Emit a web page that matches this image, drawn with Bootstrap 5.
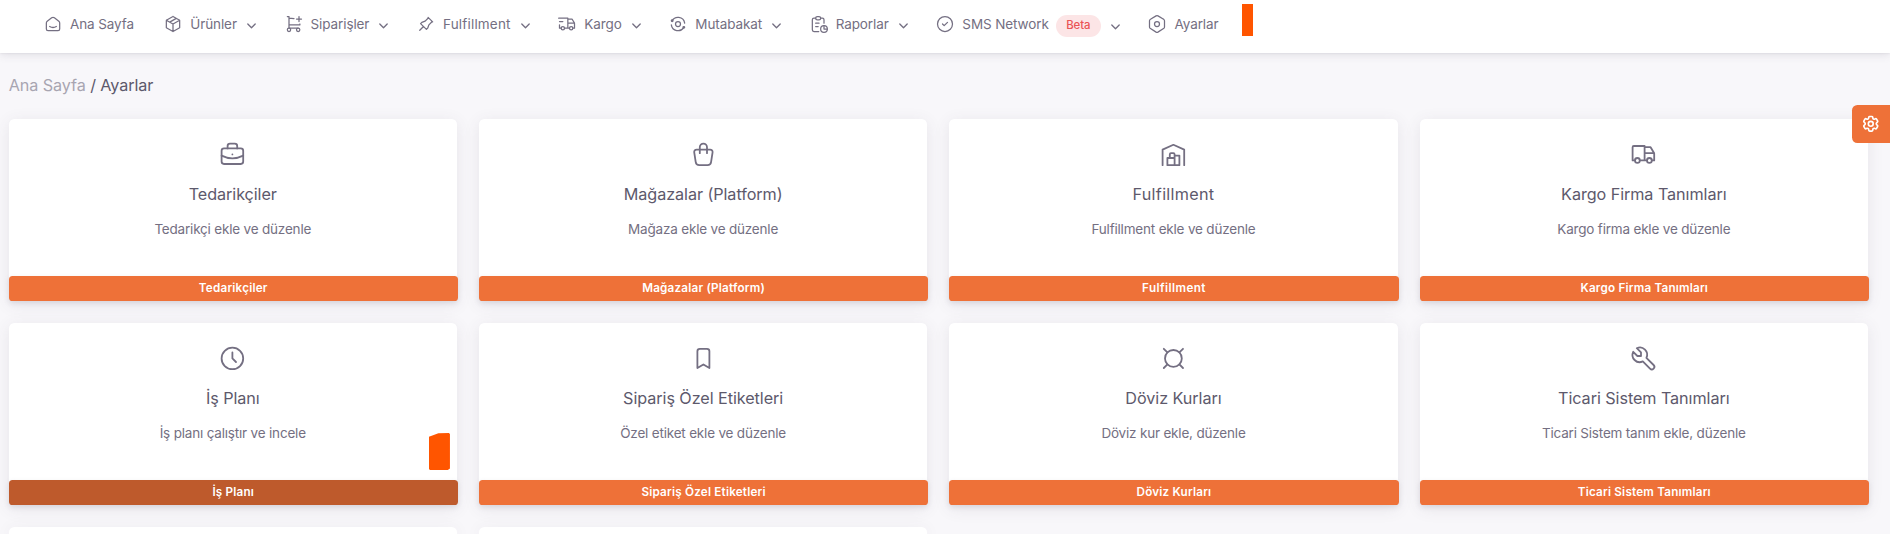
<!DOCTYPE html>
<html lang="tr">
<head>
<meta charset="utf-8">
<meta name="viewport" content="width=device-width, initial-scale=1">
<title>Ayarlar</title>
<link href="https://cdn.jsdelivr.net/npm/bootstrap@5.3.0/dist/css/bootstrap.min.css" rel="stylesheet">
<style>
  html { overflow: hidden; }
  body { background: #f8f7fa; color: #746f82; font-family: Inter, "Liberation Sans", sans-serif; font-size: 13.5px; line-height: 20px; height: 534px; overflow: hidden; }
  svg { fill: none; stroke: currentColor; stroke-width: 1.5; stroke-linecap: round; stroke-linejoin: round; flex: none; }
  .topbar { height: 53px; padding: 0 43px 5px; background: #fff; box-shadow: 0 1px 9px rgba(75, 70, 92, .16), 0 0 2px rgba(75, 70, 92, .12); }
  .topbar .nav-link { padding: 0; color: inherit; letter-spacing: -.1px; margin-right: 27.65px; white-space: nowrap; }
  .topbar .nav-link:first-child { margin-right: 29.3px; }
  .topbar .nav-icon { width: 20px; height: 20px; margin-right: 7px; }
  .topbar .chev { width: 9px; height: 6px; margin: 3px 0 0 10px; stroke-width: 1.3; }
  .spread { letter-spacing: .18px; }
  .beta { background: #fce5e6; color: #ea5455; font-size: 11.4px; font-weight: 500; width: 45px; height: 22px; line-height: 21px; padding: 0; margin: 3px 0 0 7px; letter-spacing: -.1px; }
  .topbar .beta + .chev { margin-top: 5px; }
  .marker-a { width: 11px; height: 32px; margin-left: -4px; background: #ff5500; }
  .crumbs { font-size: 16.2px; line-height: 22px; padding: 21px 0 0 8.8px; letter-spacing: -.1px; height: 66px; color: #5d596c; }
  .crumbs .muted { color: #a8a5b1; }
  .tiles { display: grid; grid-template-columns: repeat(4, minmax(0, 1fr)); gap: 22px; padding: 0 22px 0 8.6px; }
  .tile { height: 182px; border: 0; border-radius: 5.4px; box-shadow: 0 3.6px 16px rgba(75, 70, 92, .1); align-items: center; padding-top: 20.6px; }
  .tile > svg { width: 28.8px; height: 28.8px; }
  .tile h5 { font-size: 16.2px; line-height: 22px; font-weight: 400; color: #5d596c; margin: 14.4px 0 0; letter-spacing: -.07px; }
  .tile p { margin: 14px 0 0; letter-spacing: -.19px; }
  .tile .btn { position: relative; margin-top: auto; width: calc(100% + 1px); margin-right: -1px; height: 25px; padding: 0; border: 0; border-radius: 3.6px; background: #ee7138; color: #fff; font-size: 11.7px; font-weight: 600; line-height: 23px; letter-spacing: .2px; box-shadow: 0 2px 5px rgba(165, 163, 174, .3); }
  .tile .btn.pressed { background: #be5a2c; }
  .tile .spread { letter-spacing: .3px; }
  .tile .btn.spread { letter-spacing: .42px; }
  .tile.cut { height: 7px; padding: 0; border-radius: 5.4px 5.4px 0 0; }
  .marker-b { position: absolute; right: 7px; bottom: 35px; width: 21px; height: 37px; background: #ff5500; clip-path: polygon(0 10%, 45% 1%, 95% 0, 100% 3%, 100% 96%, 90% 100%, 5% 100%, 0 97%); }
  .customizer { position: absolute; right: 0; top: 105px; width: 38px; height: 38px; background: #ee7138; color: #fff; border-radius: 5.4px 0 0 5.4px; }
  .customizer svg { width: 19.5px; height: 19.5px; stroke-width: 2; }
</style>
<script src="https://cdn.jsdelivr.net/npm/bootstrap@5.3.0/dist/js/bootstrap.bundle.min.js"></script>
</head>
<body>
<svg class="d-none">
  <symbol id="chev" viewBox="0 0 9 6"><path d="M.8 1l3.7 3.8L8.2 1"/></symbol>
</svg>
<nav class="topbar d-flex align-items-center">
  <a class="nav-link d-flex align-items-center" href="#">
    <svg class="nav-icon" viewBox="0 0 24 24"><path d="M19 8.710l-5.333 -4.148a2.666 2.666 0 0 0 -3.274 0l-5.334 4.148a2.665 2.665 0 0 0 -1.029 2.105v7.2a2 2 0 0 0 2 2h12a2 2 0 0 0 2 -2v-7.2c0 -.823 -.38 -1.6 -1.03 -2.105M16 15c-2.210 1.333 -5.792 1.333 -8 0"/></svg>
    <span>Ana Sayfa</span></a>
  <a class="nav-link d-flex align-items-center" href="#">
    <svg class="nav-icon" viewBox="0 0 24 24"><path d="M12 3l8 4.500v9l-8 4.500l-8 -4.500v-9l8 -4.500M12 12l8 -4.500M12 12v9M12 12l-8 -4.500M16 5.250l-8 4.500"/></svg>
    <span>Ürünler</span><svg class="chev"><use href="#chev"/></svg></a>
  <a class="nav-link d-flex align-items-center" href="#">
    <svg class="nav-icon" viewBox="0 0 24 24"><circle cx="6" cy="19" r="2"/><circle cx="17" cy="19" r="2"/><path d="M17 17h-11v-14h-2M6 5l6.005 .429m7.138 6.573l-.143 .998h-13M15 6h6m-3 -3v6"/></svg>
    <span>Siparişler</span><svg class="chev"><use href="#chev"/></svg></a>
  <a class="nav-link d-flex align-items-center" href="#">
    <svg class="nav-icon" viewBox="0 0 24 24"><path d="M15 4.500l-4 4l-4 1.500l-1.500 1.500l7 7l1.500 -1.500l1.500 -4l4 -4M9 15l-4.500 4.500M14.500 4l5.500 5.500"/></svg>
    <span class="spread">Fulfillment</span><svg class="chev"><use href="#chev"/></svg></a>
  <a class="nav-link d-flex align-items-center" href="#">
    <svg class="nav-icon" viewBox="0 0 24 24"><circle cx="7" cy="17" r="2"/><circle cx="17" cy="17" r="2"/><path d="M5 17h-2v-4m-1 -8h11v12m-4 0h6m4 0h2v-6h-8m0 -5h5l3 5M3 9h4"/></svg>
    <span>Kargo</span><svg class="chev"><use href="#chev"/></svg></a>
  <a class="nav-link d-flex align-items-center" href="#">
    <svg class="nav-icon" viewBox="0 0 24 24"><path d="M20 11a8.100 8.100 0 0 0 -6.986 -6.918a8.095 8.095 0 0 0 -8.019 3.918M4 13a8.100 8.100 0 0 0 15 3"/><circle cx="19" cy="16" r="1"/><circle cx="5" cy="8" r="1"/><circle cx="12" cy="12" r="3"/></svg>
    <span>Mutabakat</span><svg class="chev"><use href="#chev"/></svg></a>
  <a class="nav-link d-flex align-items-center" href="#">
    <svg class="nav-icon" viewBox="0 0 24 24"><path d="M8 5h-2a2 2 0 0 0 -2 2v12a2 2 0 0 0 2 2h5.697M18 14v4h4M18 11v-4a2 2 0 0 0 -2 -2h-2M8 11h4M8 15h3"/><rect x="8" y="3" width="6" height="4" rx="2"/><circle cx="18" cy="18" r="4"/></svg>
    <span>Raporlar</span><svg class="chev"><use href="#chev"/></svg></a>
  <a class="nav-link d-flex align-items-center" href="#">
    <svg class="nav-icon" viewBox="0 0 24 24"><circle cx="12" cy="12" r="9"/><path d="M9 12l2 2l4 -4"/></svg>
    <span>SMS Network</span><span class="badge rounded-pill beta">Beta</span><svg class="chev"><use href="#chev"/></svg></a>
  <a class="nav-link d-flex align-items-center" href="#">
    <svg class="nav-icon" viewBox="0 0 24 24"><path d="M19.875 6.270a2.225 2.225 0 0 1 1.125 1.948v7.284c0 .809 -.443 1.555 -1.158 1.948l-6.750 4.270a2.269 2.269 0 0 1 -2.184 0l-6.750 -4.270a2.225 2.225 0 0 1 -1.158 -1.948v-7.285c0 -.809 .443 -1.554 1.158 -1.947l6.750 -3.980a2.330 2.330 0 0 1 2.250 0l6.750 3.980z"/><circle cx="12" cy="12" r="3"/></svg>
    <span>Ayarlar</span></a>
  <span class="marker-a align-self-start mt-1"></span>
</nav>

<h4 class="crumbs fw-normal m-0"><span class="muted">Ana Sayfa</span> / Ayarlar</h4>

<main class="tiles">
  <div class="card tile">
    <svg viewBox="0 0 24 24"><rect x="3" y="7" width="18" height="13" rx="2"/><path d="M8 7v-2a2 2 0 0 1 2 -2h4a2 2 0 0 1 2 2v2M12 12v.010M3 13a20 20 0 0 0 18 0"/></svg>
    <h5>Tedarikçiler</h5><p>Tedarikçi ekle ve düzenle</p><button class="btn">Tedarikçiler</button>
  </div>
  <div class="card tile">
    <svg viewBox="0 0 24 24"><path d="M6.331 8h11.339a2 2 0 0 1 1.977 2.304l-1.255 8.152a3 3 0 0 1 -2.966 2.544h-6.852a3 3 0 0 1 -2.965 -2.544l-1.255 -8.152a2 2 0 0 1 1.977 -2.304zM9 11v-5a3 3 0 0 1 6 0v5"/></svg>
    <h5>Mağazalar (Platform)</h5><p>Mağaza ekle ve düzenle</p><button class="btn">Mağazalar (Platform)</button>
  </div>
  <div class="card tile">
    <svg viewBox="0 0 24 24"><path d="M3 21v-13l9 -4l9 4v13M13 13h4v8h-10v-6h6M13 21v-9a1 1 0 0 0 -1 -1h-2a1 1 0 0 0 -1 1v3"/></svg>
    <h5 class="spread">Fulfillment</h5><p>Fulfillment ekle ve düzenle</p><button class="btn spread">Fulfillment</button>
  </div>
  <div class="card tile">
    <svg viewBox="0 0 24 24"><circle cx="7" cy="17" r="2"/><circle cx="17" cy="17" r="2"/><path d="M5 17h-2v-11a1 1 0 0 1 1 -1h9v12m-4 0h6m4 0h2v-6h-8m0 -5h5l3 5"/></svg>
    <h5>Kargo Firma Tanımları</h5><p>Kargo firma ekle ve düzenle</p><button class="btn">Kargo Firma Tanımları</button>
  </div>
  <div class="card tile">
    <svg viewBox="0 0 24 24"><circle cx="12" cy="12" r="9"/><path d="M12 7v5l3 3"/></svg>
    <h5>İş Planı</h5><p>İş planı çalıştır ve incele</p><button class="btn pressed">İş Planı</button>
    <span class="marker-b"></span>
  </div>
  <div class="card tile">
    <svg viewBox="0 0 24 24"><path d="M9 4h6a2 2 0 0 1 2 2v14l-5 -3l-5 3v-14a2 2 0 0 1 2 -2"/></svg>
    <h5>Sipariş Özel Etiketleri</h5><p>Özel etiket ekle ve düzenle</p><button class="btn">Sipariş Özel Etiketleri</button>
  </div>
  <div class="card tile">
    <svg viewBox="0 0 24 24"><circle cx="12" cy="12" r="7"/><path d="M4 4l3 3M20 4l-3 3M4 20l3 -3M20 20l-3 -3"/></svg>
    <h5>Döviz Kurları</h5><p>Döviz kur ekle, düzenle</p><button class="btn">Döviz Kurları</button>
  </div>
  <div class="card tile">
    <svg viewBox="0 0 24 24"><path d="M7 10h3v-3l-3.500 -3.500a6 6 0 0 1 8 8l6 6a2 2 0 0 1 -3 3l-6 -6a6 6 0 0 1 -8 -8l3.500 3.500"/></svg>
    <h5>Ticari Sistem Tanımları</h5><p>Ticari Sistem tanım ekle, düzenle</p><button class="btn">Ticari Sistem Tanımları</button>
  </div>
  <div class="card tile cut"></div>
  <div class="card tile cut"></div>
</main>

<button class="customizer border-0 p-0 d-flex align-items-center justify-content-center" aria-label="Tema">
  <svg viewBox="0 0 24 24"><path d="M9.594 3.940c.090-.542.560-.940 1.110-.940h2.593c.550 0 1.020.398 1.110.940l.213 1.281c.063.374.313.686.645.870.074.040.147.083.220.127.325.196.720.257 1.075.124l1.217-.456a1.125 1.125 0 0 1 1.370.490l1.296 2.247a1.125 1.125 0 0 1-.260 1.431l-1.003.827c-.293.241-.438.613-.430.992a7.723 7.723 0 0 1 0 .255c-.008.378.137.750.430.991l1.004.827c.424.350.534.955.260 1.430l-1.298 2.247a1.125 1.125 0 0 1-1.369.491l-1.217-.456c-.355-.133-.750-.072-1.076.124a6.470 6.470 0 0 1-.220.128c-.331.183-.581.495-.644.869l-.213 1.281c-.090.543-.560.940-1.110.940h-2.594c-.550 0-1.019-.398-1.110-.940l-.213-1.281c-.062-.374-.312-.686-.644-.870a6.520 6.520 0 0 1-.220-.127c-.325-.196-.720-.257-1.076-.124l-1.217.456a1.125 1.125 0 0 1-1.369-.490l-1.297-2.247a1.125 1.125 0 0 1 .260-1.431l1.004-.827c.292-.240.437-.613.430-.991a6.932 6.932 0 0 1 0-.255c.007-.380-.138-.751-.430-.992l-1.004-.827a1.125 1.125 0 0 1-.260-1.430l1.297-2.247a1.125 1.125 0 0 1 1.370-.491l1.216.456c.356.133.751.072 1.076-.124.072-.044.146-.086.220-.128.332-.183.582-.495.644-.869l.214-1.280Z"/><circle cx="12" cy="12" r="3"/></svg>
</button>
</body>
</html>
